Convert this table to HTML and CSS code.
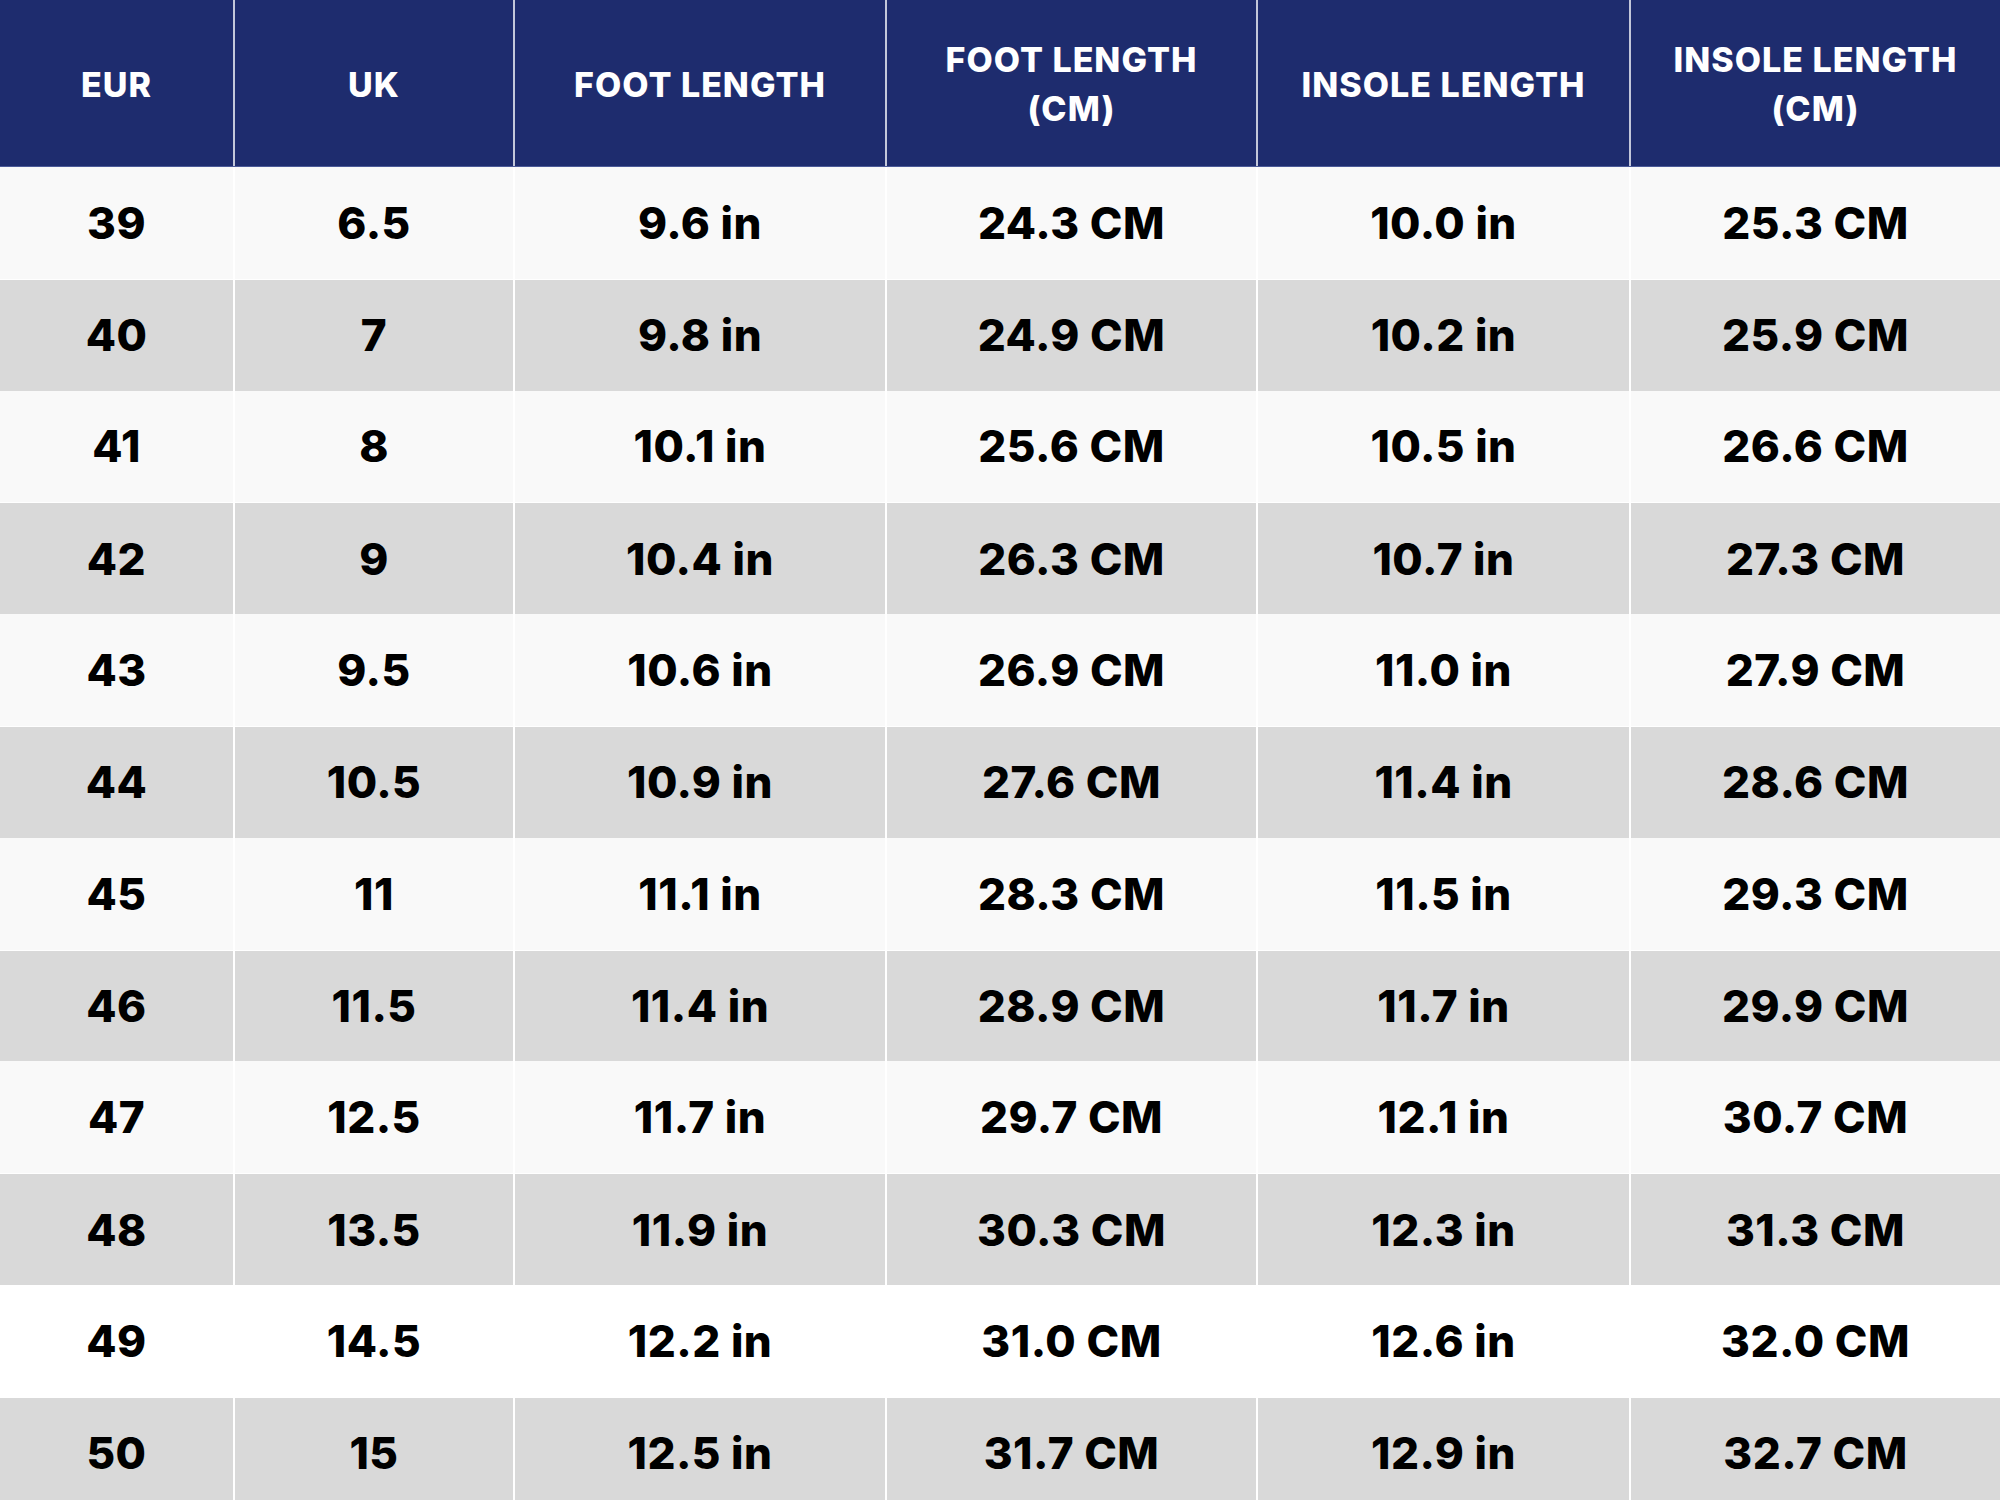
FILE: index.html
```html
<!DOCTYPE html>
<html>
<head>
<meta charset="utf-8">
<link rel="stylesheet" href="styles.css">
</head>
<body>
<div class="chart">
  <div class="row head">
    <div class="cell">EUR</div>
    <div class="cell">UK</div>
    <div class="cell">FOOT LENGTH</div>
    <div class="cell">FOOT LENGTH<br>(CM)</div>
    <div class="cell">INSOLE LENGTH</div>
    <div class="cell">INSOLE LENGTH<br>(CM)</div>
  </div>
  <div class="row light"><div class="cell">39</div><div class="cell">6.5</div><div class="cell">9.6 in</div><div class="cell">24.3 CM</div><div class="cell">10.0 in</div><div class="cell">25.3 CM</div></div>
  <div class="row grey"><div class="cell">40</div><div class="cell">7</div><div class="cell">9.8 in</div><div class="cell">24.9 CM</div><div class="cell">10.2 in</div><div class="cell">25.9 CM</div></div>
  <div class="row light"><div class="cell">41</div><div class="cell">8</div><div class="cell">10.1 in</div><div class="cell">25.6 CM</div><div class="cell">10.5 in</div><div class="cell">26.6 CM</div></div>
  <div class="row grey"><div class="cell">42</div><div class="cell">9</div><div class="cell">10.4 in</div><div class="cell">26.3 CM</div><div class="cell">10.7 in</div><div class="cell">27.3 CM</div></div>
  <div class="row light"><div class="cell">43</div><div class="cell">9.5</div><div class="cell">10.6 in</div><div class="cell">26.9 CM</div><div class="cell">11.0 in</div><div class="cell">27.9 CM</div></div>
  <div class="row grey"><div class="cell">44</div><div class="cell">10.5</div><div class="cell">10.9 in</div><div class="cell">27.6 CM</div><div class="cell">11.4 in</div><div class="cell">28.6 CM</div></div>
  <div class="row light"><div class="cell">45</div><div class="cell">11</div><div class="cell">11.1 in</div><div class="cell">28.3 CM</div><div class="cell">11.5 in</div><div class="cell">29.3 CM</div></div>
  <div class="row grey"><div class="cell">46</div><div class="cell">11.5</div><div class="cell">11.4 in</div><div class="cell">28.9 CM</div><div class="cell">11.7 in</div><div class="cell">29.9 CM</div></div>
  <div class="row light"><div class="cell">47</div><div class="cell">12.5</div><div class="cell">11.7 in</div><div class="cell">29.7 CM</div><div class="cell">12.1 in</div><div class="cell">30.7 CM</div></div>
  <div class="row grey"><div class="cell">48</div><div class="cell">13.5</div><div class="cell">11.9 in</div><div class="cell">30.3 CM</div><div class="cell">12.3 in</div><div class="cell">31.3 CM</div></div>
  <div class="row white"><div class="cell">49</div><div class="cell">14.5</div><div class="cell">12.2 in</div><div class="cell">31.0 CM</div><div class="cell">12.6 in</div><div class="cell">32.0 CM</div></div>
  <div class="row grey"><div class="cell">50</div><div class="cell">15</div><div class="cell">12.5 in</div><div class="cell">31.7 CM</div><div class="cell">12.9 in</div><div class="cell">32.7 CM</div></div>
</div>
</body>
</html>
```
FILE: styles.css
```css
html, body {
  margin: 0;
  padding: 0;
  background: #ffffff;
}
body {
  width: 2000px;
  height: 1500px;
  overflow: hidden;
  font-family: "Inter", "Open Sans", sans-serif;
}
.chart {
  display: flex;
  flex-direction: column;
  width: 2000px;
}
.row {
  display: grid;
  grid-template-columns: 233px 280px 372px 371px 373px 1fr;
  height: 111.8px;
  box-sizing: border-box;
  flex: none;
}
.cell {
  display: flex;
  align-items: center;
  justify-content: center;
  text-align: center;
  box-sizing: border-box;
}
.cell + .cell {
  border-left: 2px solid #ffffff;
}
.head {
  height: 167px;
  background: #1e2c6e;
  border-bottom: 1px solid #4b5a98;
}
.head .cell {
  color: #ffffff;
  font-weight: 800;
  font-size: 34px;
  letter-spacing: 1px;
  line-height: 49px;
  padding-top: 2px;
}
.head .cell + .cell {
  border-left: 2px solid #c3c7da;
}
.light, .grey, .white {
  font-weight: 800;
  font-size: 44px;
  color: #000000;
  letter-spacing: 0.5px;
}
.light { background: #f9f9f9; }
.grey { background: #d9d9d9; border-top: 1px solid #ffffff; }
.white { background: #ffffff; }
```
